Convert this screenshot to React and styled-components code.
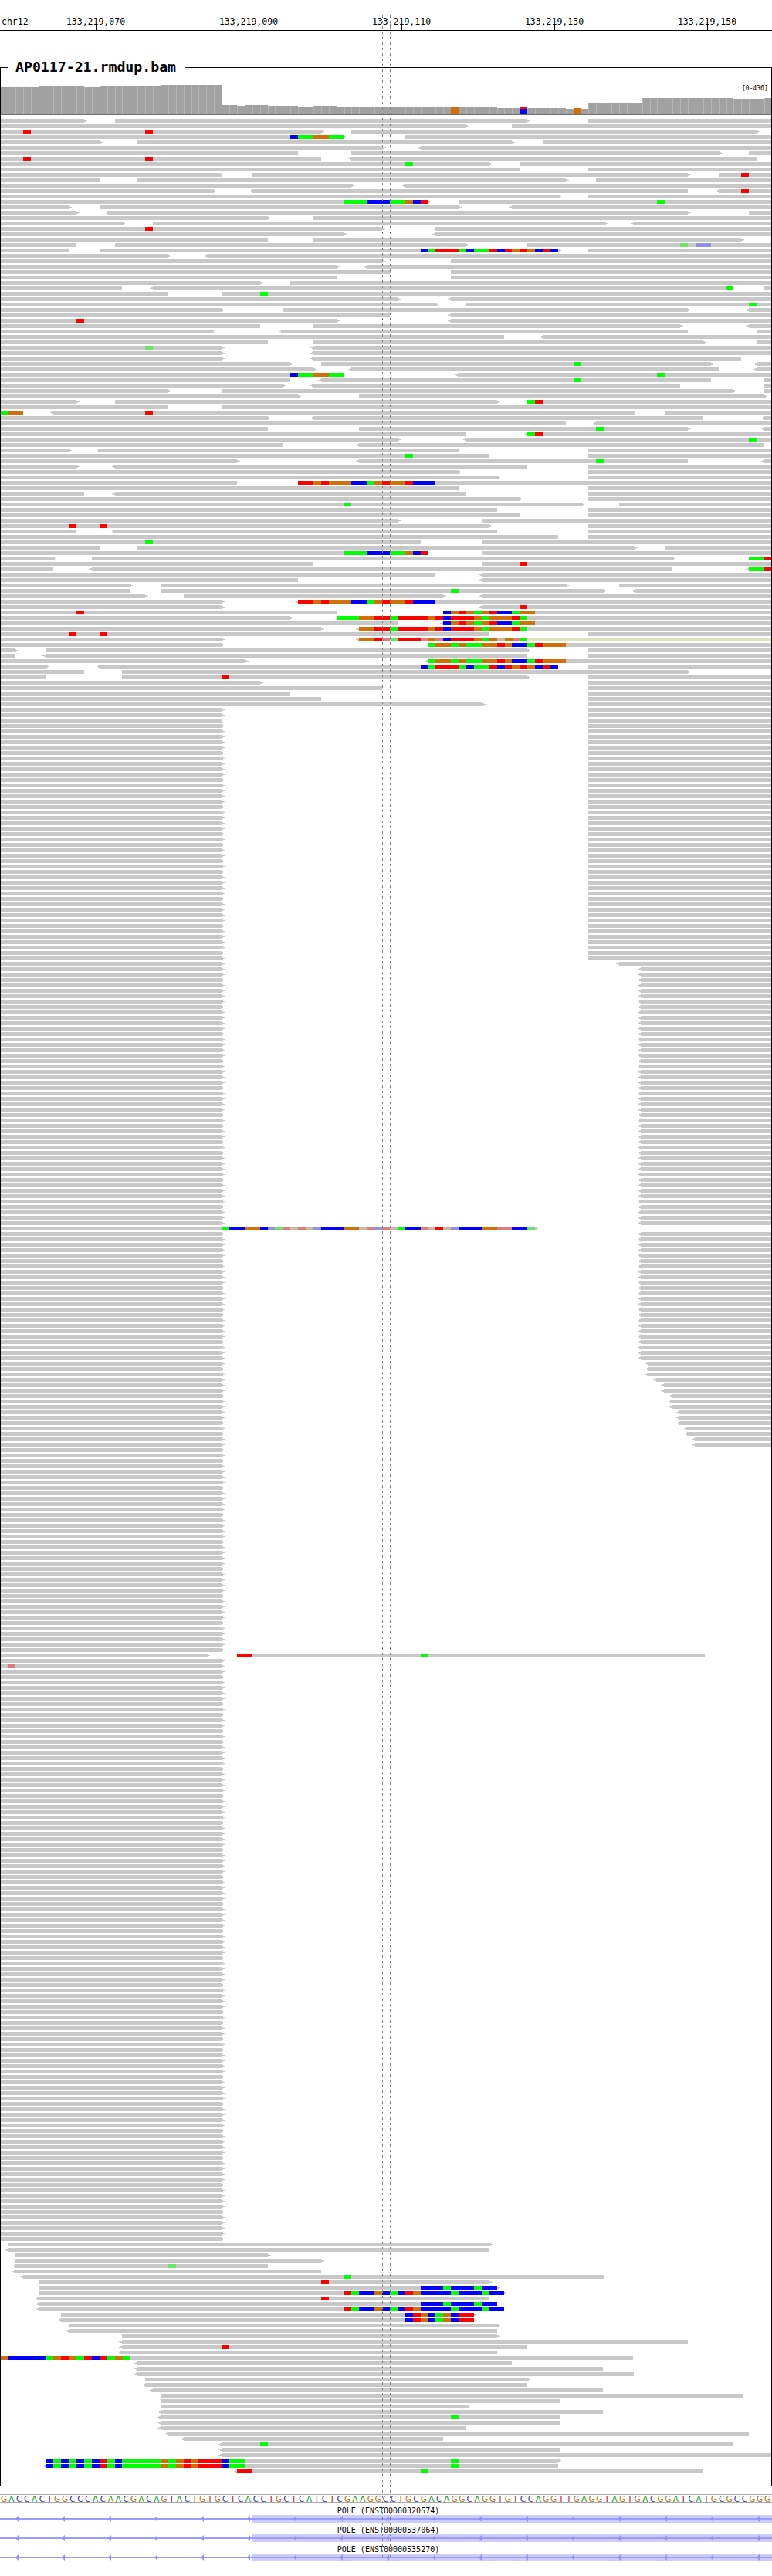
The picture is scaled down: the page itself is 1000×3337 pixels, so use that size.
import React from "react";
import styled, { createGlobalStyle } from "styled-components";

const GlobalStyle = createGlobalStyle`
  html, body { margin: 0; padding: 0; background: #fff; }
  body { font-family: "DejaVu Sans Mono", monospace; color: #000; }
`;

const Page = styled.div`
  position: relative;
  width: 1000px;
  height: 3337px;
  overflow: hidden;
`;
const RulerSvg = styled.svg`
  display: block;
  width: 1000px;
  height: 40px;
  margin-bottom: 36px;
  font-family: "DejaVu Sans Mono", monospace;
  font-size: 11.5px;
`;
const TrackSet = styled.fieldset`
  box-sizing: border-box;
  width: 1000px;
  margin: 0;
  padding: 0;
  min-width: 0;
  border: 1px solid #000;
`;
const TrackTitle = styled.legend`
  margin-left: 9px;
  padding: 0 11px 0 10px;
  height: 22px;
  font-size: 18.2px;
  line-height: 22px;
  font-weight: bold;
`;
const AlignmentSvg = styled.svg`
  display: block;
  width: 998px;
  height: 3122px;
  font-family: "DejaVu Sans Mono", monospace;
  font-size: 8px;
`;
const SequenceBar = styled.div`
  display: grid;
  grid-template-columns: repeat(101, 9.9px);
  height: 9px;
  margin-top: 10px;
  border-top: 1px solid #aaa;
  border-bottom: 1px solid #aaa;
`;
const Base = styled.span`
  text-align: center;
  font-family: "DejaVu Sans", sans-serif;
  font-size: 10.5px;
  line-height: 10px;
  color: ${(p) => p.$color};
`;
const GeneList = styled.div`
  margin-top: 5px;
`;
const GeneRow = styled.div`
  height: 25px;
`;
const GeneLabel = styled.div`
  height: 11px;
  text-align: center;
  font-size: 10px;
  line-height: 12px;
  margin-left: 6px;
`;
const GeneSvg = styled.svg`
  display: block;
  width: 1000px;
  height: 10px;
`;
const CursorLines = styled.svg`
  position: absolute;
  left: 0;
  top: 0;
  width: 1000px;
  height: 3337px;
  pointer-events: none;
`;

const COLORS = {
  r: "#ff0000", g: "#00ff00", b: "#0000ff", o: "#d17105",
  R: "#e07c7c", G: "#66e766", B: "#9090e0", O: "#c8b8a0", y: "#d9e4bd",
};

const M24 = "@545b554g564r594g604b614g634r644b654r663o673r683o693b703r713b723";
const M89 = "@386r406o416r426o455b475g485o495r505o525r535b564";
const M91 = "@574b584o594r604o614g624o634r644b663g673o693";
const M94 = "@465o485r505g515r554o564r574b584r614o624g634o663r673g683";
const M97 = "@554g564o584g594o604g624o644r654o663b683g693r703o733";
const M401 = "@545b574g584b614g624b644";
const M402 = "@446r455g465b485o495b505g515b525r535o545b584g594b624g634b653";
const M406 = "@525b535r545o554b564g574o584b594r614";
const M433 = "@59b69g79b89g99b109g119b129r139g149b158g208o218g228o238r248o257r287b297g317@584g594";
const M15 = "@446g475b505g525o535b545r554";

const TOP_ROWS = [
  "0-109> 149-683> 762-1000",
  "0-604> 663-1000",
  "0-416>@30r40@188r198 455-980>",
  "0-446>@376b386g406o426g446 525-1000",
  "0-129> 178-663> 703-1000",
  "0-496> <545-1000",
  "0-386 455-932> 970-1000",
  "0-416@30r40@188r198 <455-980",
  "0-634>@525g535 673-1000",
  "0-673 762-1000",
  "0-287 327-891> 931-1000@960r970",
  "0-129 178-733> 772-1000",
  "0-455> <525-1000",
  "0-277> <327-891 <931-1000@960r970",
  "0-723> 762-1000",
  "0-554>" + M15 + " 594-1000@851g861",
  "0-89> 129-594> <663-1000",
  "0-99> 139-891> 970-1000",
  "0-347> 406-1000",
  "0-158> 198-783> <822-1000",
  "0-495>@188r198 564-1000",
  "0-446> <564-1000",
  "0-347 406-960>",
  "0-99 149-604> 683-1000@881G891@901B921",
  "0-89 129-723>" + M24 + " 762-1000",
  "0-218> <268-1000",
  "0-496> 584-1000",
  "0-436> <475-1000",
  "0-505> 584-1000",
  "0-436 584-1000",
  "0-337> 376-1000",
  "0-158 <198-950@941g950 990-1000",
  "0-218 287-1000@337g347",
  "0-515> <584-1000",
  "0-564> 604-1000@970g980",
  "0-287> 366-891> <970-1000",
  "0-505 <584-1000",
  "0-436>@99r109 <584-1000",
  "0-337 406-881> <970-1000",
  "0-277 <366-891 980-1000",
  "0-653 <703-1000",
  "0-347 406-911> 980-1000",
  "0-287>@188G198 <406-1000",
  "0-287> <406-1000",
  "0-287> <406-960",
  "0-376> 416-921>@743g753 <980-1000",
  "0-406> <455-931 <980-1000",
  "0-446@376b386g406o426g446 <593-1000@851g861",
  "0-376 <416-921@743g753 990-1000",
  "0-366> <406-881 990-1000",
  "0-218> 287-950> 990-1000",
  "0-386> 465-990>",
  "0-99> 149-644> 683-1000@683g693r703",
  "0-218 287-1000",
  "0-30@0g10o30 <69-822@188r198 861-1000",
  "0-347> <406-911 <990-1000",
  "0-733 <772-1000",
  "0-347 465-891>@772g782 <990-1000",
  "0-604 <683-1000@683g693r703",
  "0-515> <604-1000@970g980",
  "0-366 <465-990",
  "0-89> <129-594 762-1000",
  "0-634@525g535 762-1000",
  "0-307> <465-891@772g782 <990-1000",
  "0-99> <149-683 762-1000",
  "0-594> 762-1000",
  "0-644> 762-1000",
  "0-307 386-1000" + M89,
  "0-594 762-1000",
  "0-109 <149-604 762-1000",
  "0-673> 762-1000",
  "0-753>@446g455 802-1000",
  "0-644 762-1000",
  "0-673 762-1000",
  "0-515> 624-1000",
  "0-634>@89r99@129r139 762-1000",
  "0-99 <149-644 762-1000",
  "0-723 762-1000",
  "0-545@188g198 624-1000",
  "0-129 178-822> 861-1000",
  "0-554" + M15 + " 624-1000",
  "0-69> 119-871> 970-1000@970g990r1000",
  "0-406 624-1000@673r683",
  "0-69 <119-871 <970-1000@970g990r1000",
  "0-564 <624-1000",
  "0-386 <624-1000",
  "0-168> 208-733> 802-1000",
  "0-168 208-782>@584g594 <822-1000",
  "0-188> 238-574> <624-1000",
  "0-287> <386-1000" + M89,
  "0-287> <624-1000@673r683",
  "0-436@99r109 574-1000" + M91,
  "0-376> 436-1000@436g465o485r505g515r554o564r574b584r614o624g634o663r673g683",
  "0-515 <574-1000" + M91,
  "0-416> <465-1000" + M94,
  "0-634@89r99@129r139 762-1000",
  "0-287> <465-1000@465o485r495R505G515r545R554o564R574b584r614o624g634o644O654o664R673g683y1000@842g851",
  "0-287> 554-1000" + M97,
  "0-19> 59-683> 762-1000",
  "0-19 <59-683 762-1000",
  "0-318> <554-1000" + M97,
  "0-60> <129-723" + M24 + " 762-1000",
  "0-109 158-891>",
  "0-59 158-683>@287r297 762-1000",
  "0-337> 762-1000",
  "0-495 762-1000",
  "0-376 762-1000",
  "0-416 762-1000",
  "0-625> 762-1000",
  "0-287> 762-1000",
  "0-287> 762-1000",
  "0-287 762-1000",
];

const BOTTOM_ROWS = {
  393: "10-634>", 394: "<10-634", 395: "20-347>", 396: "20-416>",
  397: "<20-347@218G228", 398: "<20-416", 399: "<30-783@446g455",
  400: "50-634>@416r426", 401: "50-644>" + M401, 402: "50-653>" + M402,
  403: "<50-634@416r426", 404: "<50-644" + M401, 405: "<50-653" + M402,
  406: "79-614>" + M406, 407: "<79-614" + M406, 408: "89-644>", 409: "<89-644",
  410: "158-644>", 411: "<158-891", 412: "<158-683@287r297", 413: "<158-644",
  414: "0-820@0o10b59g69o79r89o99g109r119b129r139g149o159g168",
  415: "<178-663", 416: "<178-781", 417: "<178-821", 418: "188-683>",
  419: "<188-683", 420: "<198-781", 421: "208-962", 422: "208-725",
  423: "208-605>", 424: "<208-781", 425: "<208-725@584g594", 426: "<208-725",
  427: "<208-604", 428: "<218-970", 429: "<238-574", 430: "<287-950@337g347",
  431: "<287-725", 432: "<287-1000", 433: "59-723>" + M433, 434: "<59-723" + M433,
  435: "<307-911@307r327@545g554",
};

function rightBlockStart(i) {
  if (i <= 155) return "762-1000";
  if (i === 156) return "<802-1000";
  if (i <= 229) return "<830-1000";
  if (i <= 232) return "<840-1000";
  if (i === 233) return "<850-1000";
  if (i <= 235) return "<860-1000";
  if (i <= 238) return "<870-1000";
  if (i <= 241) return "<880-1000";
  if (i <= 243) return "<890-1000";
  if (i <= 245) return "<900-1000";
  return "";
}

function rowSpec(i) {
  if (i < TOP_ROWS.length) return TOP_ROWS[i];
  if (i >= 393) return BOTTOM_ROWS[i];
  if (i === 205)
    return "0-693>@287g297b317o337b347B356G366R376O386R396O406B416b446o465O475R485B495R505O515g525b545R554O564r574O584B594b624o644R663b683G693";
  if (i === 284) return "0-268> 307-913@307r327@545g554";
  if (i === 286) return "0-287>@10R20";
  return ("0-287> " + rightBlockStart(i)).trim();
}

const READ_TOP = 154;
const READ_PITCH = 7;

function buildReadPaths() {
  const gray = [];
  const marks = {};
  for (let i = 0; i < 436; i++) {
    const y = READ_TOP + READ_PITCH * i;
    rowSpec(i)
      .split(" ")
      .forEach((spec) => {
        const m = spec.match(/^(<?)(\d+)-(\d+)(>?)(.*)$/);
        if (!m) return;
        const a = +m[2];
        const b = +m[3];
        gray.push(`M${a} ${y}H${b}V${y + 5}H${a}Z`);
        if (m[1]) gray.push(`M${a} ${y + 1}h-2v1h-2v1h2v1h2Z`);
        if (m[4]) gray.push(`M${b} ${y + 1}h2v1h2v1h-2v1h-2Z`);
        m[5]
          .split("@")
          .filter(Boolean)
          .forEach((chain) => {
            let x = parseInt(chain, 10);
            for (const p of chain.matchAll(/([a-zA-Z])(\d+)/g)) {
              const e = +p[2];
              (marks[p[1]] = marks[p[1]] || []).push(`M${x} ${y}H${e}V${y + 5}H${x}Z`);
              x = e;
            }
          });
      });
  }
  return { gray: gray.join(""), marks };
}

const COVERAGE = [
  [0, 4, 113], [5, 10, 112], [11, 12, 113], [13, 15, 112], [16, 16, 111], [17, 17, 112],
  [18, 20, 111], [21, 28, 110], [29, 30, 136], [31, 31, 137], [32, 34, 136], [35, 38, 137],
  [39, 40, 138], [41, 43, 137], [44, 54, 138], [55, 58, 139], [59, 60, 138], [61, 62, 139],
  [63, 63, 138], [64, 64, 139], [65, 67, 140], [68, 68, 139], [69, 73, 140], [74, 74, 141],
  [75, 75, 140], [76, 76, 141], [77, 83, 134], [84, 95, 127], [96, 99, 128], [100, 100, 127],
];
const COV_BASE = 148;
const px = (k) => Math.round(9.9 * k);

function Coverage() {
  const bars = [];
  COVERAGE.forEach(([s, e, top]) => {
    for (let k = s; k <= e; k++) {
      bars.push(<rect key={k} x={px(k) + 1} y={top} width={px(k + 1) - px(k) - 1} height={COV_BASE - top} fill="#a1a1a1" />);
      bars.push(<rect key={"g" + k} x={px(k)} y={top} width={1} height={COV_BASE - top} fill="#b4b4b4" />);
    }
  });
  return (
    <g>
      {bars}
      <rect x={584} y={138} width={10} height={10} fill={COLORS.o} />
      <rect x={588} y={138} width={1} height={1} fill={COLORS.g} />
      <rect x={673} y={139} width={10} height={2} fill={COLORS.r} />
      <rect x={673} y={141} width={10} height={7} fill={COLORS.b} />
      <rect x={743} y={140} width={9} height={8} fill={COLORS.o} />
      <rect x={747} y={140} width={1} height={1} fill={COLORS.g} />
      <rect x={0} y={COV_BASE} width={1000} height={1} fill="#6e6e6e" />
    </g>
  );
}

function Reads() {
  const { gray, marks } = React.useMemo(buildReadPaths, []);
  return (
    <g>
      <path d={gray} fill="#c8c8c8" />
      {Object.keys(marks).map((c) => (
        <path key={c} d={marks[c].join("")} fill={COLORS[c]} />
      ))}
    </g>
  );
}

const TICKS = [
  [124, "133,219,070"], [322, "133,219,090"], [520, "133,219,110"],
  [718, "133,219,130"], [916, "133,219,150"],
];

function Ruler() {
  return (
    <RulerSvg viewBox="0 0 1000 40" shapeRendering="crispEdges">
      <text x={2} y={32}>chr12</text>
      {TICKS.map(([x, t]) => (
        <g key={t}>
          <text x={x} y={32} textAnchor="middle">{t}</text>
          <rect x={x} y={32} width={1} height={7} fill="#000" />
        </g>
      ))}
      <rect x={0} y={39} width={1000} height={1} fill="#000" />
    </RulerSvg>
  );
}

const SEQUENCE =
  "GACCACTGGCCCACAACGACAGTACTGTGCTCACCTGCTCATCTCGAAGG" +
  "CCTGCGACAGGCAGGTGTCCAGGTTGAGGTAGTGACGGATCATGCGCCGGG";
const BASE_COLORS = { A: "#119a11", C: "#3a3aa0", G: "#b5762a", T: "#b02020" };

const GENES = [
  { id: "ENST00000320574", h: 10 },
  { id: "ENST00000537064", h: 10 },
  { id: "ENST00000535270", h: 9 },
];

function GeneModel({ h }) {
  const arrows = [];
  for (let x = 22; x < 1000; x += 60) {
    arrows.push(<path key={x} d={`M${x - 2} 5L${x + 2} 1V9Z`} fill="#9090ff" />);
  }
  return (
    <GeneSvg viewBox="0 0 1000 10">
      <rect x={327} y={0} width={673} height={h} fill="#ccccff" />
      <rect x={0} y={4} width={1000} height={2} fill="#9a9aff" />
      {arrows}
    </GeneSvg>
  );
}

export default function App() {
  return (
    <Page>
      <GlobalStyle />
      <Ruler />
      <TrackSet>
        <TrackTitle>AP0117-21.rmdup.bam</TrackTitle>
        <AlignmentSvg viewBox="1 98 998 3122" shapeRendering="crispEdges">
          <Coverage />
          <text x={961} y={117} fill="#000">[0-436]</text>
          <Reads />
        </AlignmentSvg>
      </TrackSet>
      <SequenceBar>
        {SEQUENCE.split("").map((b, i) => (
          <Base key={i} $color={BASE_COLORS[b]}>{b}</Base>
        ))}
      </SequenceBar>
      <GeneList>
        {GENES.map((g) => (
          <GeneRow key={g.id}>
            <GeneLabel>POLE ({g.id})</GeneLabel>
            <GeneModel h={g.h} />
          </GeneRow>
        ))}
      </GeneList>
      <CursorLines viewBox="0 0 1000 3337">
        <line x1={495.5} x2={495.5} y1={20} y2={3316} stroke="#808080" strokeDasharray="3 4" />
        <line x1={505.5} x2={505.5} y1={20} y2={3316} stroke="#808080" strokeDasharray="3 4" />
      </CursorLines>
    </Page>
  );
}
